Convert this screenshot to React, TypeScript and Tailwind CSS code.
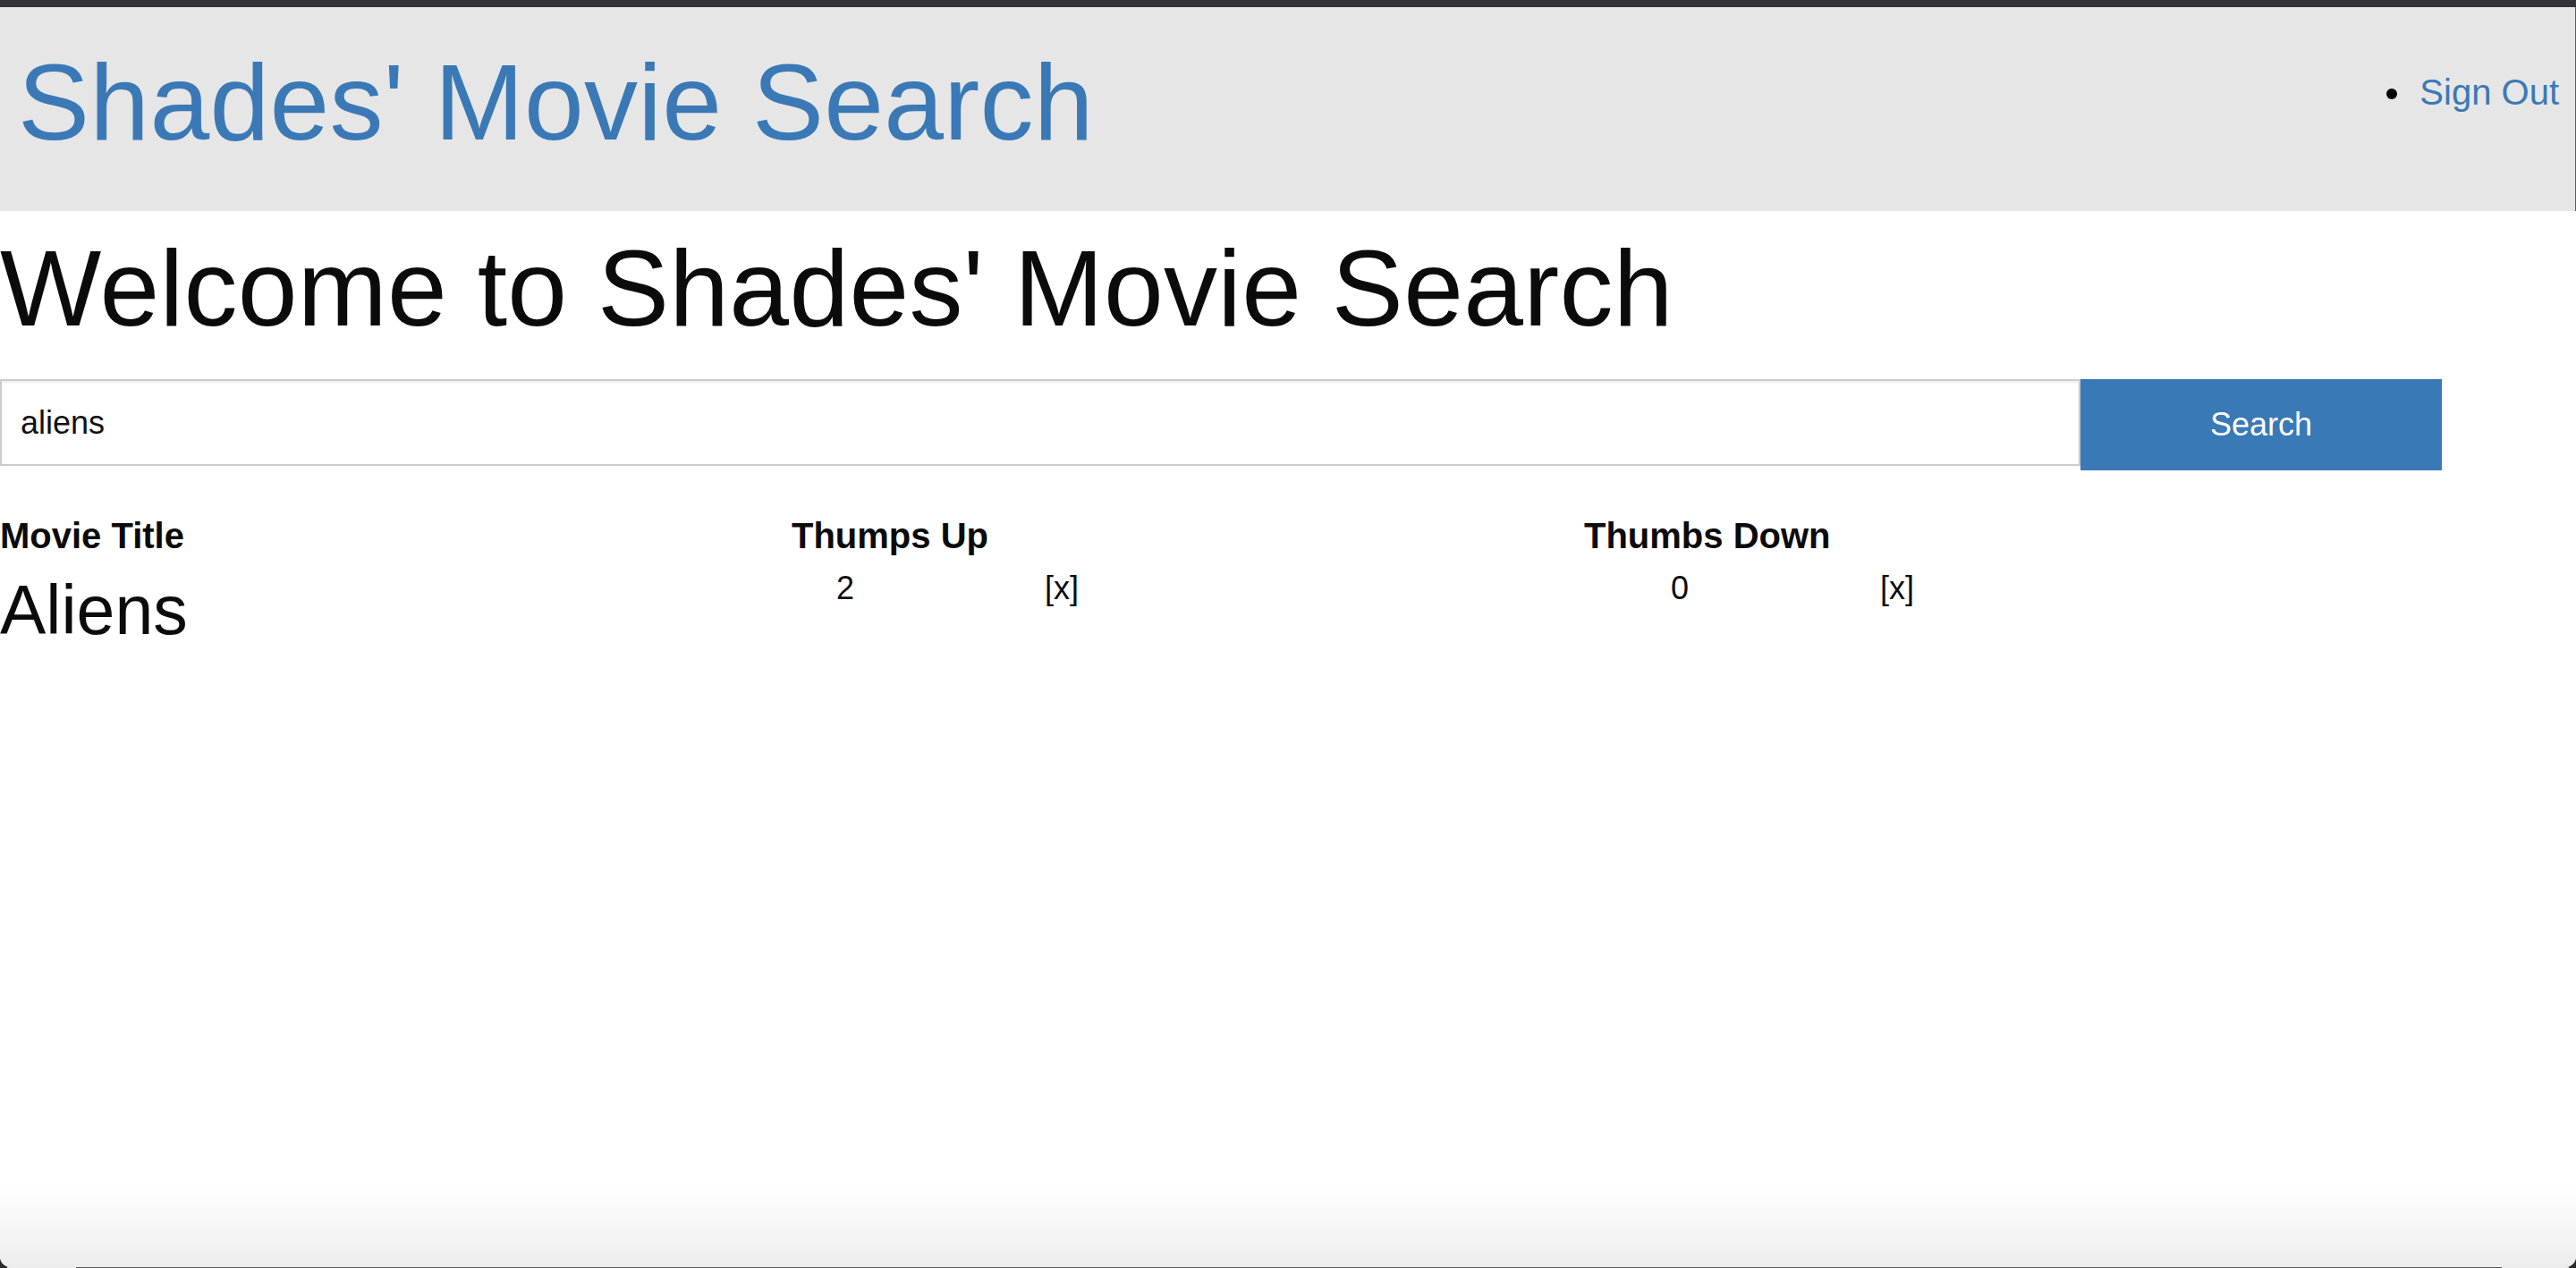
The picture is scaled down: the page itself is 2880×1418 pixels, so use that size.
import React, { useState } from 'react'

export default function App() {
  const [query, setQuery] = useState('aliens')

  const movies = [{ title: 'Aliens', up: 2, down: 0 }]

  return (
    <div className="h-[1418px] flex flex-col bg-[#2b2b2d] font-['Liberation_Sans',Arial,sans-serif]">
      {/* window top edge */}
      <div className="h-[8px] shrink-0 bg-[#333438]" />

      <div className="flex-1 flex flex-col bg-white rounded-b-[12px] overflow-hidden">
        {/* Navbar */}
        <header className="h-[228px] shrink-0 bg-[#e6e6e6] flex items-start justify-between border-r border-[#5a5b5f]">
          <a href="#" className="pl-[20px] pt-[46px] text-[120px] leading-none tracking-[0.3px] text-[#3a79b6] whitespace-nowrap">
            Shades' Movie Search
          </a>
          <ul className="pt-[75px] pr-[18px] flex items-center">
            <li className="flex items-center">
              <span className="w-[12px] h-[12px] rounded-full bg-black mr-[25px] mt-[4px]" />
              <a href="#" className="text-[40px] leading-none text-[#3a79b6]">
                Sign Out
              </a>
            </li>
          </ul>
        </header>

        {/* Page content */}
        <main className="flex-1 flex flex-col text-[#0b0b0b]">
          <h1 className="mt-[26px] text-[120px] leading-none tracking-[0.3px] whitespace-nowrap">Welcome to Shades' Movie Search</h1>

          <form className="mt-[42px] flex items-start" onSubmit={(e) => e.preventDefault()}>
            <input
              value={query}
              onChange={(e) => setQuery(e.target.value)}
              className="w-[2326px] h-[97px] border-2 border-[#cccccc] shadow-[inset_0_2px_3px_rgba(0,0,0,0.08)] pl-[21px] text-[36px] text-[#111111] bg-white outline-none"
            />
            <button type="submit" className="w-[404px] h-[102px] bg-[#3979b6] text-white text-[36px]">
              Search
            </button>
          </form>

          {/* Results */}
          <div className="mt-[53px] grid grid-cols-[885px_886px_1fr] text-[40px] font-bold leading-none">
            <div>Movie Title</div>
            <div>Thumps Up</div>
            <div>Thumbs Down</div>
          </div>

          {movies.map((m) => (
            <div key={m.title} className="mt-[21px] grid grid-cols-[885px_886px_1fr] items-start">
              <div className="mt-[4px] text-[77px] leading-none">{m.title}</div>
              <div className="flex text-[36px] leading-none">
                <span className="ml-[50px] w-[233px]">{m.up}</span>
                <span>[x]</span>
              </div>
              <div className="flex text-[36px] leading-none">
                <span className="ml-[97px] w-[234px]">{m.down}</span>
                <span>[x]</span>
              </div>
            </div>
          ))}

          <div className="flex-1" />

          {/* window bottom shading */}
          <div className="h-[90px] shrink-0 bg-linear-to-b from-white to-[#ededed]" />
        </main>
      </div>

      <div className="h-px shrink-0 flex">
        <div className="w-[8px] bg-[#2b2b2d]" />
        <div className="w-[77px] bg-[#ececec]" />
        <div className="flex-1 bg-[#555555]" />
        <div className="w-[75px] bg-[#ececec]" />
        <div className="w-[8px] bg-[#2b2b2d]" />
      </div>
    </div>
  )
}
